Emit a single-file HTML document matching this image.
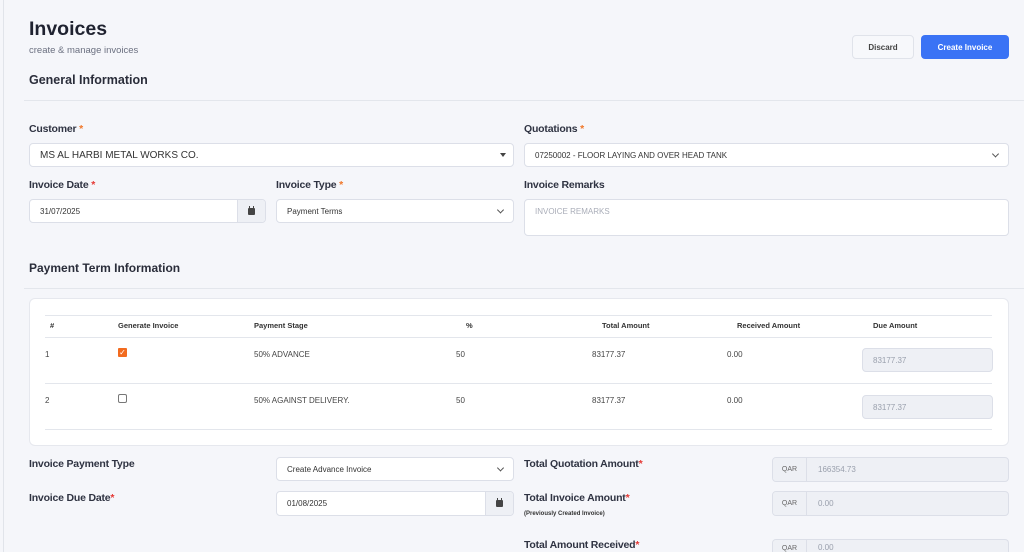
<!DOCTYPE html>
<html><head><meta charset="utf-8"><style>
*{box-sizing:border-box;margin:0;padding:0}
html{width:1024px;height:552px;overflow:hidden}
body{width:1024px;height:552px;overflow:hidden;background:#f5f6fa;font-family:"Liberation Sans",sans-serif;color:#2a2d3a;position:relative}
.a{position:absolute;white-space:nowrap}
.lbl{font-size:10.5px;font-weight:bold;color:#2f3342;letter-spacing:-0.2px}
.star{color:#f0772a}
.rstar{color:#e53935}
.in{position:absolute;background:#fff;border:1px solid #dcdfe8;border-radius:4px;font-size:9px;color:#333;padding-left:10px;display:flex;align-items:center;overflow:hidden}
.dis{background:#eef0f5;color:#9aa0ad}
.chev{position:absolute;right:10px;top:50%;width:5px;height:5px;border-right:1px solid #555;border-bottom:1px solid #555;transform:translateY(-70%) rotate(45deg)}
.addon{position:absolute;top:0;bottom:0;background:#eef0f5;border:0 solid #dcdfe8;display:flex;align-items:center;justify-content:center;font-size:7px;color:#666}
.hr{position:absolute;height:1px;background:#e3e6ec}
.th{font-size:7.5px;font-weight:bold;color:#333}
.td{font-size:8px;color:#444}
.cal{width:7px;height:7px;background:#444;border-radius:1px;position:relative}
.cal:before{content:"";position:absolute;left:1px;top:-2px;width:1px;height:2px;background:#444;box-shadow:4px 0 #444}
</style></head><body>
<div class="a" style="left:3px;top:0;width:1px;height:552px;background:#e1e4ea"></div>
<div class="a" style="left:29px;top:18px;font-size:19.5px;font-weight:bold;color:#1f2230">Invoices</div>
<div class="a" style="left:29px;top:45px;font-size:9.5px;color:#6b7080">create &amp; manage invoices</div>
<div class="a" style="left:852px;top:35px;width:62px;height:24px;border:1px solid #e0e3ea;border-radius:4px;background:#f7f8fb;font-size:8px;font-weight:bold;color:#444;display:flex;align-items:center;justify-content:center">Discard</div>
<div class="a" style="left:921px;top:35px;width:88px;height:24px;border-radius:4px;background:#3a73f5;font-size:8px;font-weight:bold;color:#fff;display:flex;align-items:center;justify-content:center">Create Invoice</div>
<div class="a" style="left:29px;top:73px;font-size:12.5px;font-weight:bold;color:#2a2d3a">General Information</div>
<div class="hr" style="left:24px;top:100px;width:1000px"></div>

<div class="a lbl" style="left:29px;top:123px">Customer <span class="star">*</span></div>
<div class="in" style="left:29px;top:143px;width:485px;height:24px;font-size:10px">MS AL HARBI METAL WORKS CO.<span style="position:absolute;right:7px;top:9px;border-left:3px solid transparent;border-right:3px solid transparent;border-top:4px solid #444"></span></div>
<div class="a lbl" style="left:524px;top:123px">Quotations <span class="star">*</span></div>
<div class="in" style="left:524px;top:143px;width:485px;height:24px;font-size:8px">07250002 - FLOOR LAYING AND OVER HEAD TANK<span class="chev"></span></div>

<div class="a lbl" style="left:29px;top:179px">Invoice Date <span class="rstar">*</span></div>
<div class="in" style="left:29px;top:199px;width:237px;height:24px;font-size:8px">31/07/2025<div class="addon" style="right:0;width:28px;border-left-width:1px"><div class="cal"></div></div></div>
<div class="a lbl" style="left:276px;top:179px">Invoice Type <span class="star">*</span></div>
<div class="in" style="left:276px;top:199px;width:238px;height:24px;font-size:8px">Payment Terms<span class="chev"></span></div>
<div class="a lbl" style="left:524px;top:179px">Invoice Remarks</div>
<div class="in" style="left:524px;top:199px;width:485px;height:37px;font-size:8px;color:#a9adb8;align-items:flex-start;padding-top:7px">INVOICE REMARKS</div>

<div class="a" style="left:29px;top:261px;font-size:12px;font-weight:bold">Payment Term Information</div>
<div class="hr" style="left:24px;top:288px;width:1000px"></div>

<div class="a" style="left:29px;top:298px;width:980px;height:148px;background:#fff;border:1px solid #e6e8ee;border-radius:6px"></div>
<div class="hr" style="left:45px;top:315px;width:947px"></div>
<div class="hr" style="left:45px;top:337px;width:947px"></div>
<div class="hr" style="left:45px;top:383px;width:947px"></div>
<div class="hr" style="left:45px;top:429px;width:947px"></div>
<div class="a th" style="left:50px;top:321px">#</div>
<div class="a th" style="left:118px;top:321px">Generate Invoice</div>
<div class="a th" style="left:254px;top:321px">Payment Stage</div>
<div class="a th" style="left:466px;top:321px">%</div>
<div class="a th" style="left:602px;top:321px">Total Amount</div>
<div class="a th" style="left:737px;top:321px">Received Amount</div>
<div class="a th" style="left:873px;top:321px">Due Amount</div>

<div class="a td" style="left:45px;top:350px">1</div>
<div class="a" style="left:118px;top:348px;width:9px;height:9px;background:#f26b1f;border-radius:1px;color:#fff;font-size:8px;line-height:9px;text-align:center">✓</div>
<div class="a td" style="left:254px;top:350px">50% ADVANCE</div>
<div class="a td" style="left:456px;top:350px">50</div>
<div class="a td" style="left:592px;top:350px">83177.37</div>
<div class="a td" style="left:727px;top:350px">0.00</div>
<div class="in dis" style="left:862px;top:348px;width:131px;height:24px;font-size:8px">83177.37</div>

<div class="a td" style="left:45px;top:396px">2</div>
<div class="a" style="left:118px;top:394px;width:9px;height:9px;border:1px solid #777;border-radius:2px;background:#fff"></div>
<div class="a td" style="left:254px;top:396px">50% AGAINST DELIVERY.</div>
<div class="a td" style="left:456px;top:396px">50</div>
<div class="a td" style="left:592px;top:396px">83177.37</div>
<div class="a td" style="left:727px;top:396px">0.00</div>
<div class="in dis" style="left:862px;top:395px;width:131px;height:24px;font-size:8px">83177.37</div>

<div class="a lbl" style="left:29px;top:458px">Invoice Payment Type</div>
<div class="in" style="left:276px;top:457px;width:238px;height:24px;font-size:8px">Create Advance Invoice<span class="chev"></span></div>
<div class="a lbl" style="left:29px;top:492px">Invoice Due Date<span class="rstar">*</span></div>
<div class="in" style="left:276px;top:491px;width:238px;height:25px;font-size:8px">01/08/2025<div class="addon" style="right:0;width:28px;border-left-width:1px"><div class="cal"></div></div></div>

<div class="a lbl" style="left:524px;top:458px">Total Quotation Amount<span class="rstar">*</span></div>
<div class="in dis" style="left:772px;top:457px;width:237px;height:25px;font-size:8px;padding-left:45px">166354.73<div class="addon" style="left:0;width:34px;border-right-width:1px">QAR</div></div>
<div class="a lbl" style="left:524px;top:492px">Total Invoice Amount<span class="rstar">*</span></div>
<div class="a" style="left:524px;top:511px;font-size:6px;font-weight:bold;color:#333">(Previously Created Invoice)</div>
<div class="in dis" style="left:772px;top:491px;width:237px;height:25px;font-size:8px;padding-left:45px">0.00<div class="addon" style="left:0;width:34px;border-right-width:1px">QAR</div></div>
<div class="a lbl" style="left:524px;top:539px">Total Amount Received<span class="rstar">*</span></div>
<div class="in dis" style="left:772px;top:539px;width:237px;height:13px;font-size:8px;padding-left:45px;border-bottom:0;border-radius:4px 4px 0 0;align-items:flex-end">0.00<div class="addon" style="left:0;width:34px;border-right-width:1px;align-items:flex-end">QAR</div></div>
</body></html>
